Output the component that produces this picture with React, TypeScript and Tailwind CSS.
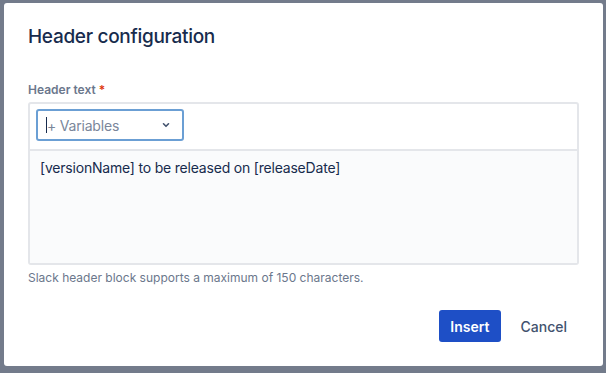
export default function App() {
  return (
    <div
      className="w-[606px] h-[373px] bg-[#737b8b] pt-[3px] pl-[4px]"
      style={{ fontFamily: "Inter, 'Noto Sans', sans-serif" }}
    >
      <div className="w-[599px] h-[363px] bg-white rounded-[3px] px-6 pt-[22px] flex flex-col">
        {/* Title */}
        <h1 className="text-[19px] font-medium leading-6 text-[#172b4d] tracking-[-0.3px]">
          Header configuration
        </h1>

        {/* Label */}
        <div className="mt-[33px] text-[12px] font-semibold leading-4 text-[#6b778c] flex gap-[3px]">
          Header text
          <span className="text-[#de350b]">*</span>
        </div>

        {/* Editor */}
        <div className="mt-[4px] w-[551px] border-2 border-[#e4e6ea] rounded-[3px] flex flex-col">
          <div className="h-[47px] px-[6px] pt-[5px] border-b-2 border-[#e4e6ea]">
            <div className="w-[148px] h-[32px] border-2 border-[#6b9fd4] rounded-[3px] flex items-center pl-[8px] pr-[11px]">
              <span className="w-px h-[16px] bg-[#172b4d]" />
              <span className="text-[14px] text-[#7a869a] flex-1 tracking-[-0.2px]">+ Variables</span>
              <svg width="10" height="10" viewBox="0 0 10 10" fill="none">
                <path d="M2.5 3.8L5 6.3L7.5 3.8" stroke="#42526e" strokeWidth="1.6" strokeLinecap="round" strokeLinejoin="round" />
              </svg>
            </div>
          </div>
          <div className="h-[112px] bg-[#fafbfc] px-[10px] pt-[7px] text-[14px] leading-5 text-[#172b4d] tracking-[-0.2px]">
            [versionName] to be released on [releaseDate]
          </div>
        </div>

        {/* Helper */}
        <p className="mt-[5px] text-[12px] leading-4 text-[#6b778c]">
          Slack header block supports a maximum of 150 characters.
        </p>

        {/* Actions */}
        <div className="mt-[24px] flex justify-end items-center gap-[8px]">
          <button className="h-[32px] px-[11px] rounded-[3px] bg-[#1e4fc6] text-white text-[14px] font-semibold">
            Insert
          </button>
          <button className="h-[32px] px-[12px] text-[14px] font-medium text-[#42526e]">
            Cancel
          </button>
        </div>
      </div>
    </div>
  );
}
